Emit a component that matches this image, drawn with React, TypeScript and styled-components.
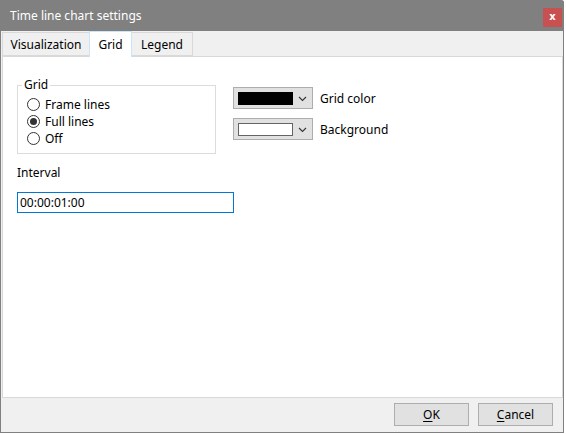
import styled, { createGlobalStyle } from 'styled-components';

const GlobalStyle = createGlobalStyle`
  html, body {
    margin: 0;
    padding: 0;
    background: #ffffff;
  }
  body {
    font-family: 'Noto Sans', 'Open Sans', 'Liberation Sans', sans-serif;
    font-size: 12px;
    color: #000000;
  }
  * {
    box-sizing: border-box;
  }
`;

const Chevron = () => (
  <svg width="9" height="6" viewBox="0 0 9 6">
    <path d="M1 1 L4.5 4.5 L8 1" fill="none" stroke="#333" strokeWidth="1.1" />
  </svg>
);

const ColorCombo = ({ color, label }: { color: string; label: string }) => (
  <ComboRow>
    <Combo>
      <Swatch $color={color} />
      <ComboArrow>
        <Chevron />
      </ComboArrow>
    </Combo>
    <span>{label}</span>
  </ComboRow>
);

const Radio = ({ checked, label }: { checked?: boolean; label: string }) => (
  <RadioRow>
    <RadioCircle>{checked && <RadioDot />}</RadioCircle>
    <span>{label}</span>
  </RadioRow>
);

const tabs = [
  { name: 'Visualization', width: 88 },
  { name: 'Grid', width: 43 },
  { name: 'Legend', width: 62 },
];

const App = () => {
  const active = 'Grid';

  return (
    <>
      <GlobalStyle />
      <Window>
        <TitleBar>
          <Title>Time line chart settings</Title>
          <CloseButton>x</CloseButton>
        </TitleBar>
        <Body>
          <TabStrip>
            {tabs.map((t) => (
              <Tab key={t.name} $active={t.name === active} $width={t.width}>
                {t.name}
              </Tab>
            ))}
          </TabStrip>
          <Panel>
            <TopRow>
              <Group>
                <GroupLegend>Grid</GroupLegend>
                <Radio label="Frame lines" />
                <Radio label="Full lines" checked />
                <Radio label="Off" />
              </Group>
              <ColorColumn>
                <ColorCombo color="#000000" label="Grid color" />
                <ColorCombo color="#ffffff" label="Background" />
              </ColorColumn>
            </TopRow>
            <FieldLabel>Interval</FieldLabel>
            <TextInput defaultValue="00:00:01:00" />
          </Panel>
        </Body>
        <Footer>
          <Button>
            <u>O</u>K
          </Button>
          <Button>
            <u>C</u>ancel
          </Button>
        </Footer>
      </Window>
    </>
  );
};

const Window = styled.div`
  width: 564px;
  height: 433px;
  display: flex;
  flex-direction: column;
  border: 1px solid #808080;
  border-top: none;
  border-top-right-radius: 3px;
  background: #f0f0f0;
`;

const TitleBar = styled.div`
  height: 31px;
  margin: 0 -1px;
  background: #808080;
  display: flex;
  align-items: flex-start;
  justify-content: space-between;
  padding: 0 1px 0 10px;
  border-top-right-radius: 3px;
`;

const Title = styled.div`
  color: #ffffff;
  line-height: 16px;
  margin-top: 8px;
`;

const CloseButton = styled.div`
  width: 19px;
  height: 19px;
  margin-top: 8px;
  margin-right: 1px;
  background: #c75050;
  color: #ffffff;
  font-family: 'DejaVu Sans', sans-serif;
  font-weight: bold;
  font-size: 10px;
  line-height: 18px;
  text-align: center;
`;

const Body = styled.div`
  flex: 1;
  display: flex;
  flex-direction: column;
  padding: 0 0 0 1px;
`;

const TabStrip = styled.div`
  height: 25px;
  display: flex;
  align-items: flex-end;
`;

const Tab = styled.div<{ $active?: boolean; $width: number }>`
  width: ${(p) => p.$width}px;
  height: ${(p) => (p.$active ? '26px' : '24px')};
  display: flex;
  align-items: center;
  justify-content: center;
  margin-bottom: ${(p) => (p.$active ? '-1px' : '0')};
  position: relative;
  z-index: ${(p) => (p.$active ? 1 : 0)};
  background: ${(p) => (p.$active ? '#ffffff' : '#f0f0f0')};
  border: 1px solid ${(p) => (p.$active ? '#cce4f7' : '#d9d9d9')};
  border-bottom: ${(p) => (p.$active ? 'none' : '1px solid #d9d9d9')};
  margin-right: -1px;
  padding-bottom: ${(p) => (p.$active ? '1px' : '0')};
`;

const Panel = styled.div`
  flex: 1;
  background: #ffffff;
  border: 1px solid #d9d9d9;
  padding: 28px 0 0 14px;
  display: flex;
  flex-direction: column;
  align-items: flex-start;
`;

const TopRow = styled.div`
  display: flex;
  align-items: flex-start;
  gap: 17px;
`;

const Group = styled.div`
  position: relative;
  width: 199px;
  height: 69px;
  border: 1px solid #dcdcdc;
  padding: 10px 0 0 9px;
`;

const GroupLegend = styled.span`
  position: absolute;
  top: -9px;
  left: 4px;
  padding: 0 2px;
  background: #ffffff;
  line-height: 16px;
`;

const RadioRow = styled.div`
  height: 17px;
  display: flex;
  align-items: center;
  gap: 5px;
`;

const RadioCircle = styled.div`
  width: 13px;
  height: 13px;
  border: 1px solid #333333;
  border-radius: 50%;
  display: flex;
  align-items: center;
  justify-content: center;
`;

const RadioDot = styled.div`
  width: 7px;
  height: 7px;
  border-radius: 50%;
  background: #333333;
`;

const ColorColumn = styled.div`
  display: flex;
  flex-direction: column;
  gap: 9px;
  padding-top: 2px;
`;

const ComboRow = styled.div`
  display: flex;
  align-items: center;
  gap: 7px;
`;

const Combo = styled.div`
  width: 80px;
  height: 22px;
  background: #e1e1e1;
  border: 1px solid #adadad;
  display: flex;
  align-items: center;
  padding-left: 4px;
`;

const Swatch = styled.div<{ $color: string }>`
  width: 55px;
  height: 13px;
  background: ${(p) => p.$color};
  border: 1px solid ${(p) => (p.$color === '#ffffff' ? '#646464' : p.$color)};
`;

const ComboArrow = styled.div`
  flex: 1;
  display: flex;
  justify-content: center;
  padding-top: 1px;
`;

const FieldLabel = styled.div`
  margin-top: 11px;
  line-height: 16px;
`;

const TextInput = styled.input`
  margin-top: 11px;
  width: 217px;
  height: 21px;
  border: 1px solid #0078d7;
  padding: 0 2px;
  font: inherit;
  color: #000000;
  outline: none;
`;

const Footer = styled.div`
  height: 34px;
  display: flex;
  justify-content: flex-end;
  align-items: flex-start;
  gap: 9px;
  padding: 5px 10px 0 0;
`;

const Button = styled.div`
  width: 75px;
  height: 23px;
  background: #e1e1e1;
  border: 1px solid #adadad;
  display: flex;
  align-items: center;
  justify-content: center;

  u {
    text-underline-offset: 2px;
  }
`;

export default App;
